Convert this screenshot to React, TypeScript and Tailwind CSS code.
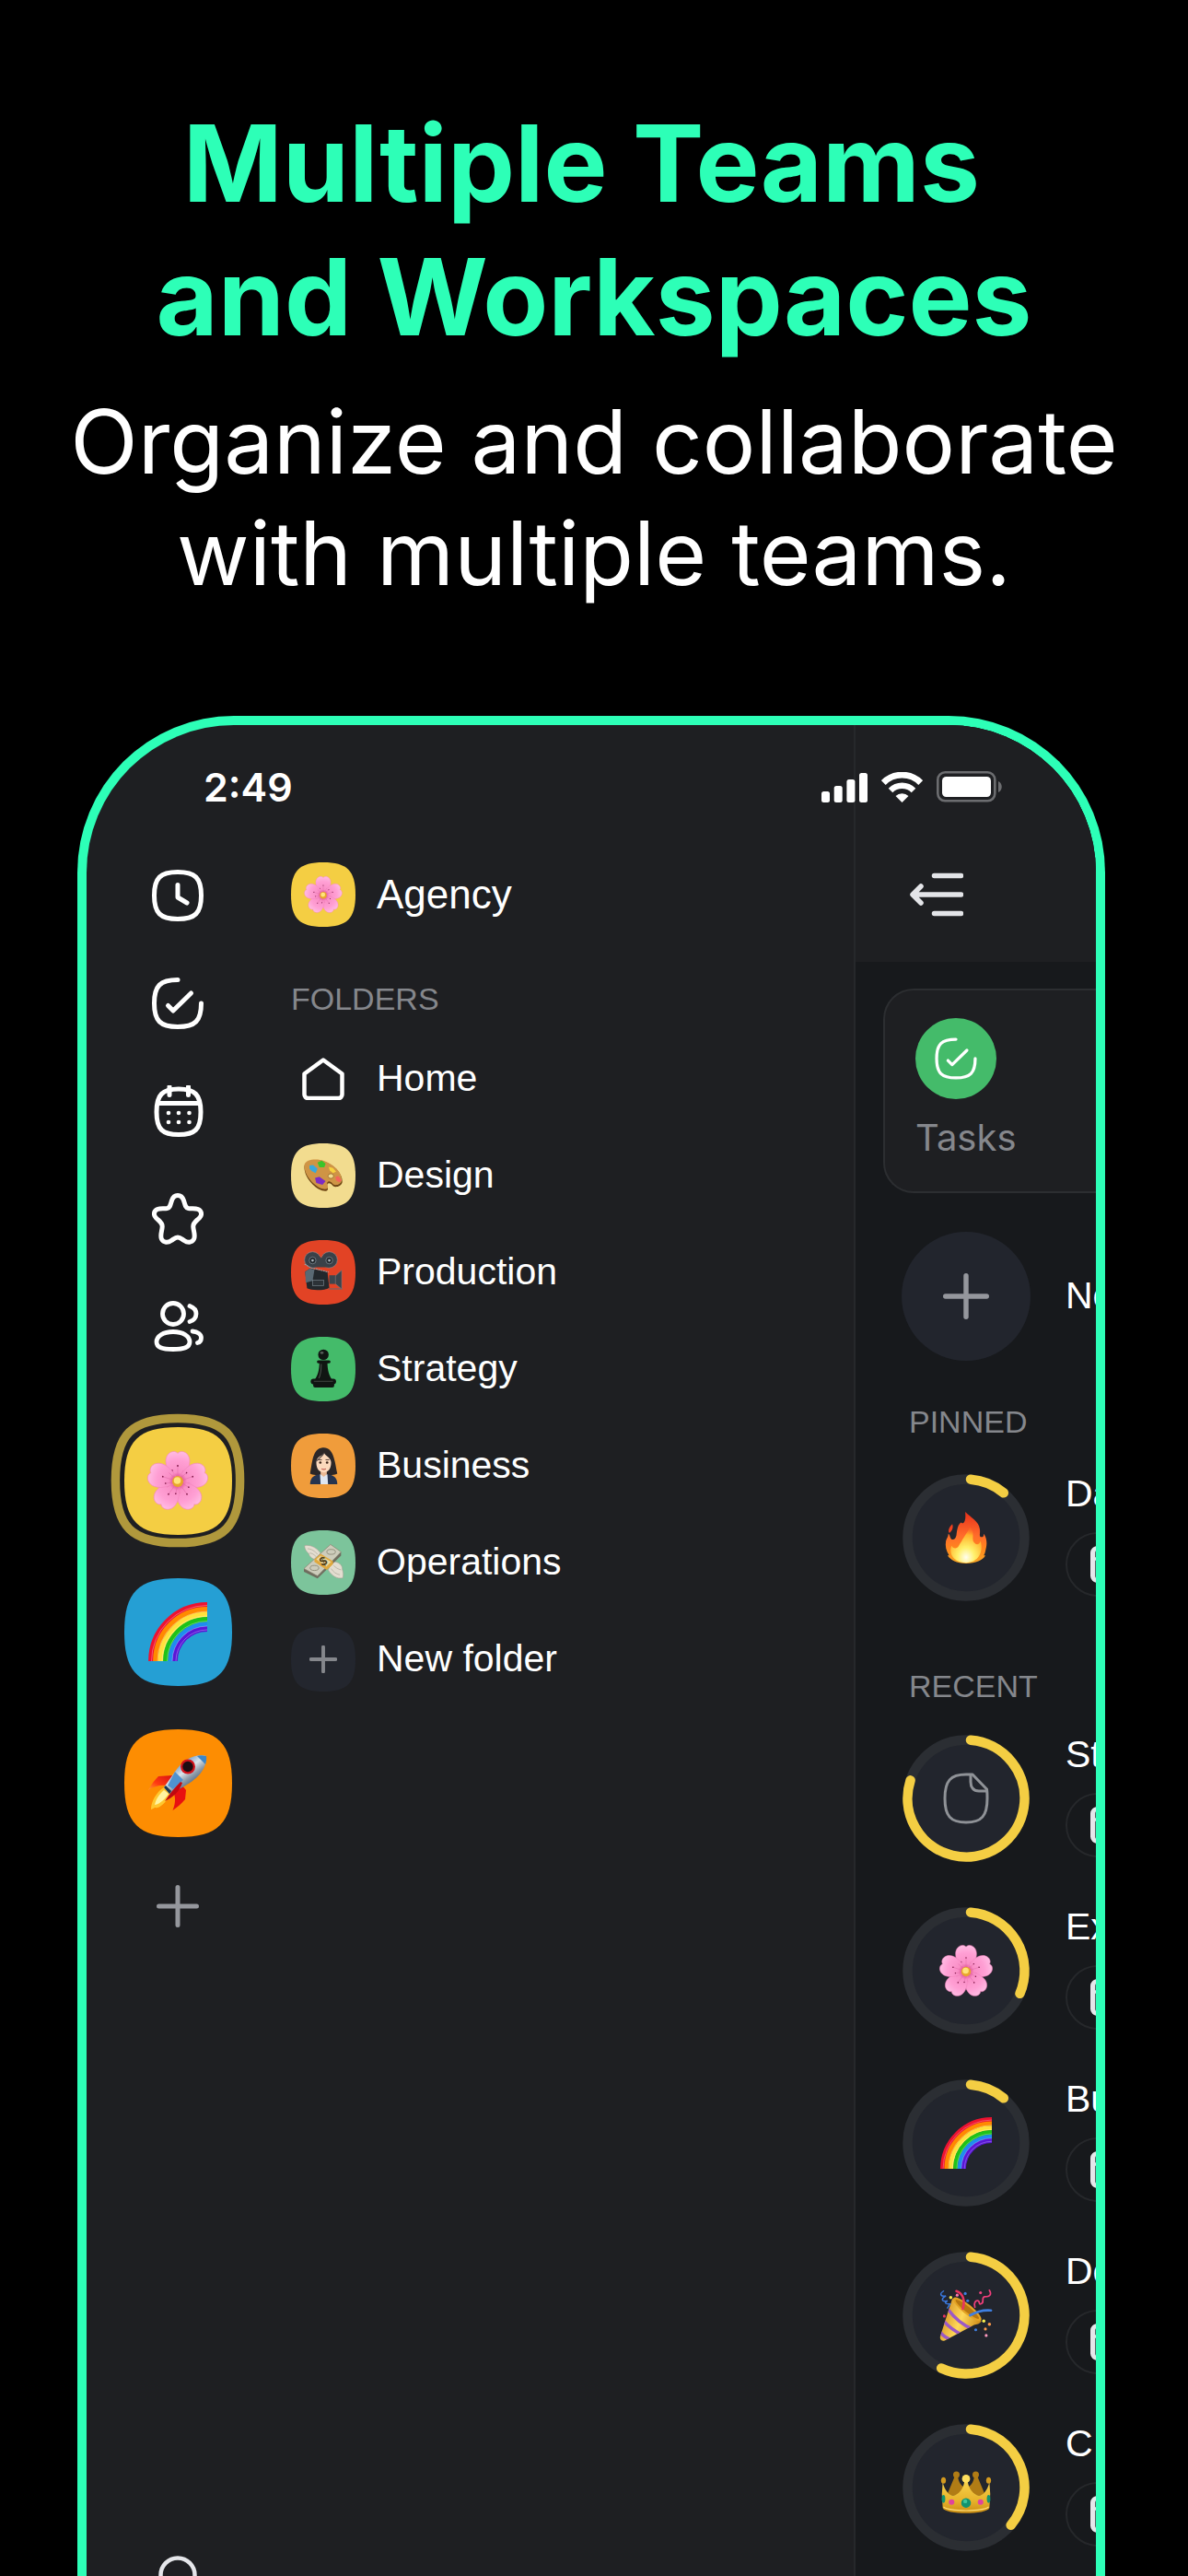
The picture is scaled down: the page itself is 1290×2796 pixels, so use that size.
import type { ReactNode } from "react";

const SQUIRCLE = "M50 0C87 0 100 13 100 50S87 100 50 100 0 87 0 50 13 0 50 0Z";

/* ---------- Line icons ---------- */

function ClockIcon() {
  return (
    <svg viewBox="0 0 56 56" className="size-14" fill="none" stroke="currentColor" strokeWidth="5" strokeLinecap="round" strokeLinejoin="round">
      <path d="M28 2.5C47 2.5 53.5 9 53.5 28S47 53.5 28 53.5 2.5 47 2.5 28 9 2.5 28 2.5Z" />
      <path d="M28 16.5V30L38 36" />
    </svg>
  );
}

function CheckIcon({ className, stroke = 5 }: { className: string; stroke?: number }) {
  return (
    <svg viewBox="0 0 56 56" className={className} fill="none" stroke="currentColor" strokeWidth={stroke} strokeLinecap="round" strokeLinejoin="round">
      <path d="M28 2.5C9 2.5 2.5 9 2.5 28S9 53.5 28 53.5 53.5 47 53.5 28" />
      <path d="M17.5 30.5L23 36L42.5 17" />
    </svg>
  );
}

function CalendarIcon() {
  return (
    <svg viewBox="0 0 56 56" className="size-14" fill="none" stroke="currentColor" strokeWidth="5" strokeLinecap="round">
      <path d="M29 4C46.500 4 53 10 53 29S46.500 53.500 29 53.500 5 48 5 29 11.500 4 29 4Z" />
      <path d="M6.500 19.500H51.500M19 1.500V10.500M39.500 1.500V10.500" />
      <g fill="currentColor" stroke="none">
        <circle cx="18" cy="30" r="2.3" />
        <circle cx="29" cy="30" r="2.3" />
        <circle cx="40.5" cy="30" r="2.3" />
        <circle cx="18" cy="40" r="2.3" />
        <circle cx="29" cy="40" r="2.3" />
        <circle cx="40.5" cy="40" r="2.3" />
      </g>
    </svg>
  );
}

function StarIcon() {
  return (
    <svg viewBox="0 0 56 56" className="size-14" fill="none" stroke="currentColor" strokeWidth="5" strokeLinejoin="round">
      <path d="M28 2.5C31.5 2.5 33.5 5 34.5 8C36 13 36.5 16 39.5 16.5C43 17 46.5 16 50 17.5C54.5 19.5 54.5 24 51.5 27C48 30.5 44.5 32 44.8 36.5C45 41 47.5 46 45.5 50C43.5 54 38.5 54 35 51.5C32 49.5 30.5 48 28 48C25.5 48 24 49.5 21 51.5C17.5 54 12.5 54 10.5 50C8.5 46 11 41 11.2 36.5C11.5 32 8 30.5 4.5 27C1.5 24 1.5 19.5 6 17.5C9.5 16 13 17 16.5 16.5C19.5 16 20 13 21.5 8C22.5 5 24.5 2.5 28 2.5Z" />
    </svg>
  );
}

function UsersIcon() {
  return (
    <svg viewBox="0 0 56 56" className="size-14" fill="none" stroke="currentColor" strokeWidth="4.8" strokeLinecap="round">
      <circle cx="23" cy="14" r="11.5" />
      <path d="M23 33.5C34 33.5 41 38.5 41 44.5S35 52.5 23 52.5 5 50.5 5 44.5 12 33.5 23 33.5Z" />
      <path d="M41 5.5C45 7 48 10 48 14S45 21.5 41 22.5M44 33C50 33.5 53.5 36.5 53.5 40C53.5 43 52 45 49.5 45.5" />
    </svg>
  );
}

function HomeIcon() {
  return (
    <svg viewBox="0 0 46 46" className="size-[46px]" fill="none" stroke="currentColor" strokeWidth="4.5" strokeLinejoin="round">
      <path d="M23 2.5L43.5 17.5V40A4 4 0 0 1 39.5 44H6.5A4 4 0 0 1 2.5 40V17.5Z" />
    </svg>
  );
}

function PlusIcon({ className, stroke }: { className: string; stroke: number }) {
  return (
    <svg viewBox="0 0 46 46" className={className} fill="none" stroke="currentColor" strokeWidth={stroke} strokeLinecap="round">
      <path d="M23 2.5V43.5M2.5 23H43.5" />
    </svg>
  );
}

function CollapseIcon() {
  return (
    <svg viewBox="0 0 58 48" className="h-12 w-[58px]" fill="none" stroke="currentColor" strokeWidth="5.5" strokeLinecap="round" strokeLinejoin="round">
      <path d="M26.5 3.5H55.5M4 24H55.5M26.5 44.5H55.5M12 15L3 24L12 33" />
    </svg>
  );
}

function DocIcon() {
  return (
    <svg viewBox="0 0 50 56" className="h-14 w-[50px]" fill="none" stroke="#8f9297" strokeWidth="3" strokeLinejoin="round">
      <path d="M32 2H25C8 2 2 9 2 28S8 54 25 54 48 47 48 28C48 24 48 21 47.5 18Z" />
      <path d="M30 2V10C30 16 33 20 39 20H47.5" />
    </svg>
  );
}

/* ---------- Emoji art, all on a 64 unit grid ---------- */

function Blossom() {
  return (
    <g>
      <defs>
        <radialGradient id="petal" gradientUnits="userSpaceOnUse" cx="32" cy="33" r="33">
          <stop offset="0.1" stopColor="#d9428a" />
          <stop offset="0.3" stopColor="#f98fc6" />
          <stop offset="0.7" stopColor="#ff9fd4" />
          <stop offset="1" stopColor="#ffbde4" />
        </radialGradient>
      </defs>
      {[0, 72, 144, 216, 288].map((a) => (
        <g key={a} transform={`rotate(${a} 32 33)`}>
          <path d="M32 34C26 28 19 20 19 11C19 4 24 0 28.5 0.5C31 0.8 32 2.5 32 2.5S33 0.8 35.5 0.5C40 0 45 4 45 11C45 20 38 28 32 34Z" fill="url(#petal)" stroke="#f384bd" strokeWidth="0.6" />
          <path d="M32 31V17M30 30L26 21M34 30L38 21" stroke="#e069a8" strokeWidth="0.5" fill="none" />
          <circle cx="32" cy="16" r="0.9" fill="#7d1545" />
          <circle cx="26" cy="21" r="0.8" fill="#7d1545" />
        </g>
      ))}
      <circle cx="32" cy="33" r="6" fill="#e9a52d" />
      <circle cx="31.5" cy="32" r="3.8" fill="#ffe37a" />
    </g>
  );
}

function Rainbow() {
  const bands = [
    ["#ee1230", 61], ["#ff8a00", 56], ["#ffe13c", 50.5],
    ["#1fc219", 45], ["#1f8cf0", 39.8], ["#5a16d6", 35],
  ] as const;
  return (
    <g fill="none">
      {bands.map(([color, r]) => (
        <path key={color} d={`M${64 - r} 64A${r} ${r} 0 0 1 64 ${64 - r}`} stroke={color} strokeWidth="5.8" />
      ))}
      {[60.5, 54, 49, 43.5, 38, 34].map((r) => (
        <path key={r} d={`M${64 - r} 64A${r} ${r} 0 0 1 64 ${64 - r}`} stroke="#fff" strokeOpacity="0.3" strokeWidth="1" />
      ))}
    </g>
  );
}

function Rocket() {
  return (
    <g transform="translate(0 2)">
      <defs>
        <linearGradient id="hull" x1="0.2" y1="0.2" x2="0.7" y2="0.8">
          <stop offset="0" stopColor="#3d79b8" />
          <stop offset="0.45" stopColor="#dce5ea" />
          <stop offset="0.7" stopColor="#8d9aa6" />
          <stop offset="1" stopColor="#3c5a7c" />
        </linearGradient>
        <linearGradient id="fin" x1="1" y1="0" x2="0" y2="1">
          <stop offset="0" stopColor="#d80f12" />
          <stop offset="0.6" stopColor="#ff3b12" />
          <stop offset="1" stopColor="#ffa228" />
        </linearGradient>
      </defs>
      <path d="M17 35C9 40 3 50 3 59C6 58 6 57 8 57C10 59 20 52 24 42Z" fill="#ffc62e" />
      <path d="M17 38C11 43 8 49 7 54C13 53 19 47 22 42Z" fill="#fff4a0" />
      <path d="M0 38C3 32 7 27 11 23L27 22L20 33C13 32 6 34 0 38Z" fill="url(#fin)" />
      <path d="M26.5 60C31 57 36 53 40 48L41 38L36 32L28 42C30 48 29 54 26.5 60Z" fill="#e81010" />
      <path d="M63 1C50-2 37 6 29 18L17 35L23 42L37 35C52 27 64 16 63 1Z" fill="url(#hull)" />
      <path d="M63 1C59 0 56 0 53 1L62 10C63 7 63.5 4 63 1Z" fill="#3d86c6" />
      <path d="M29 18L21 33L27 37L38 27Z" fill="#4f92cf" />
      <path d="M17 35L23 42L25 39L19 33Z" fill="#193650" />
      <path d="M35 29C29 35 23 42 18 50C27 46 34 39 37 30Z" fill="#c00810" />
      <circle cx="43" cy="12.5" r="8" fill="#d3131b" />
      <circle cx="43" cy="12.5" r="5.7" fill="#1c0d12" />
    </g>
  );
}

function Fire() {
  return (
    <g>
      <defs>
        <linearGradient id="flame" x1="0" y1="0" x2="0" y2="1">
          <stop offset="0" stopColor="#e8301a" />
          <stop offset="0.45" stopColor="#ff6a2b" />
          <stop offset="0.75" stopColor="#ff8a1c" />
          <stop offset="1" stopColor="#f7a928" />
        </linearGradient>
        <radialGradient id="ember" cx="0.5" cy="0.85" r="0.8">
          <stop offset="0" stopColor="#fffdf0" />
          <stop offset="0.35" stopColor="#fff06a" />
          <stop offset="0.8" stopColor="#ffb02a" />
          <stop offset="1" stopColor="#ff8424" stopOpacity="0.3" />
        </radialGradient>
      </defs>
      <path d="M31 0C38 7 48 12 49 21C50 26 48 29 50 31C53 32 54 30 54 27C57 31 58.5 38 57 44C56 48 56 51 54 54L56 54C53 60 44 64 32 64C20 64 13 60 9 54L11 54C7 48 6 42 7 36C8 32 10 31 10 27C12 28 12 32 14 34C17 35 19 33 20 29C21 21 22 15 26 13C28 15 29 14 30 12C32 8 31 3 31 0Z" fill="url(#flame)" />
      <path d="M15 15C17 21 13 25 11 26C9 22 12 18 15 15Z" fill="#f2401f" />
      <path d="M37 19C44 26 38 33 42 38C45 42 49 40 50 36C54 50 47 63 32 63C17 63 10 52 14 42C16 46 21 46 23 42C27 35 31 29 37 19Z" fill="url(#ember)" />
    </g>
  );
}

function Party() {
  return (
    <g fill="none" strokeLinecap="round">
      <defs>
        <linearGradient id="cone" x1="0" y1="0.3" x2="1" y2="0.7">
          <stop offset="0" stopColor="#d18b1c" />
          <stop offset="0.5" stopColor="#ffd95a" />
          <stop offset="1" stopColor="#c7810f" />
        </linearGradient>
        <clipPath id="coneShape">
          <path d="M15 11L51 39C49 43 45 43 42 44L6 63C2 65-1 62 0 58Z" />
        </clipPath>
      </defs>
      <path d="M15 11L51 39C49 43 45 43 42 44L6 63C2 65-1 62 0 58Z" fill="url(#cone)" />
      <g clipPath="url(#coneShape)" stroke="#9b59c6" strokeWidth="4" strokeLinecap="butt">
        <path d="M9 24C18 36 27 44 40 49M4 39C12 48 18 52 27 56M0 53C4 58 8 61 14 62" />
      </g>
      <ellipse cx="33.5" cy="24.5" rx="22" ry="6" transform="rotate(39 33.5 24.5)" fill="#e3a324" />
      <ellipse cx="33.5" cy="24.5" rx="18.5" ry="3.5" transform="rotate(39 33.5 24.5)" fill="#b8770f" />
      <path d="M20 2C28 5 31 13 28 24" stroke="#e8345f" strokeWidth="3" />
      <path d="M37 32C44 28 52 25 63 26" stroke="#3f7fe0" strokeWidth="3" />
      <path d="M43 22C41 17 44 13 47 14C50 16 47 18 50 18C56 17 50 10 55 9C62 9 64 6 61 1" stroke="#ef3f7a" strokeWidth="2" />
      <path d="M4 2C-2 6 1 9 7 8C0 12 2 16 9 14C4 17 7 18 12 18L9 23" stroke="#3a78dd" strokeWidth="1.7" />
      <g stroke="none">
        <circle cx="13" cy="10" r="2" fill="#f9ef4e" />
        <circle cx="21" cy="7" r="1.8" fill="#ff7ab0" />
        <circle cx="31" cy="5" r="1.8" fill="#3f7fe0" />
        <circle cx="34" cy="14" r="1.8" fill="#3f7fe0" />
        <circle cx="50" cy="4" r="1.8" fill="#f0457f" />
        <circle cx="54" cy="39" r="2" fill="#f9ef4e" />
        <circle cx="61" cy="43" r="2" fill="#ff9a4a" />
        <circle cx="44" cy="50" r="1.8" fill="#3f7fe0" />
        <circle cx="56" cy="49" r="1.8" fill="#ff9a4a" />
        <circle cx="57" cy="57" r="1.8" fill="#ff9ac0" />
        <circle cx="5" cy="33" r="1.8" fill="#e8345f" />
      </g>
    </g>
  );
}

function Crown() {
  return (
    <g>
      <defs>
        <linearGradient id="gold" x1="0" y1="0" x2="0" y2="1">
          <stop offset="0" stopColor="#f7d24c" />
          <stop offset="0.6" stopColor="#e8b32b" />
          <stop offset="1" stopColor="#c98d14" />
        </linearGradient>
      </defs>
      <g fill="#b17c15">
        <circle cx="20" cy="16" r="4" />
        <circle cx="44" cy="16" r="4" />
        <path d="M18 18L8 42H56L46 18L42 18C42 26 36 32 32 32S22 26 22 18Z" />
      </g>
      <g fill="#d39a20">
        <ellipse cx="4" cy="23" rx="3" ry="4" />
        <ellipse cx="60" cy="23" rx="3" ry="4" />
      </g>
      <path d="M3 26L2 40L3 57C6 66 58 66 61 57L62 40L61 26C58 36 53 42 48 42C41 41 35 33 34 24H30C29 33 23 41 16 42C11 42 6 36 3 26Z" fill="url(#gold)" />
      <circle cx="32" cy="21" r="5" fill="#ffdf5e" />
      <path d="M4 56C12 62 52 62 60 56" fill="none" stroke="#ffe07a" strokeWidth="1.2" />
      <circle cx="32" cy="51" r="6" fill="#12936f" />
      <circle cx="31" cy="49" r="2.5" fill="#3fc79b" />
      <circle cx="14" cy="50" r="3.5" fill="#e0449c" />
      <circle cx="50" cy="50" r="3.5" fill="#e0449c" />
      <ellipse cx="4" cy="46" rx="2.2" ry="5" fill="#12936f" />
      <ellipse cx="60" cy="46" rx="2.2" ry="5" fill="#12936f" />
    </g>
  );
}

function Palette() {
  return (
    <g>
      <path d="M1 15C4 6 20 4 34 9C50 15 63 29 62 42C60 49 51 51 47 48C44 44 40 42 38 45C36 49 42 54 36 56C22 58-2 34 1 15Z" fill="#6e4413" />
      <path d="M1 13C4 5 20 3 34 8C50 14 62 27 61 39C60 46 51 48 47 45C44 41 40 39 38 42C36 46 42 51 36 53C22 55-2 31 1 13Z" fill="#cf9445" />
      <ellipse cx="43.5" cy="32" rx="4.5" ry="3.8" fill="#f3dc8c" stroke="#8a5a20" strokeWidth="1" />
      <path d="M9 15L15 14L22 20L19 27L13 24L9 20Z" fill="#38a9dc" />
      <path d="M22 10L29 7L35 12L33 18L25 18Z" fill="#3cc42a" />
      <path d="M40 17L47 19L52 25L47 27L42 23Z" fill="#f8d23e" />
      <path d="M51 33L56 32L61 39L57 42L52 39Z" fill="#f4655a" />
      <path d="M18 35L25 33L35 40L30 46L20 43Z" fill="#7c2bc4" />
    </g>
  );
}

function Camera() {
  return (
    <g>
      <circle cx="14" cy="11" r="13" fill="#3a4148" stroke="#8d979f" strokeWidth="0.8" />
      <circle cx="41" cy="11" r="13" fill="#3a4148" stroke="#8d979f" strokeWidth="0.8" />
      <path d="M16 4H24L28 8L32 4H40V23H14Z" fill="#3a4148" />
      <circle cx="14" cy="12" r="5.5" fill="#20262b" stroke="#7d8991" strokeWidth="1.2" />
      <circle cx="41" cy="12" r="5.5" fill="#20262b" stroke="#7d8991" strokeWidth="1.2" />
      <circle cx="14" cy="12" r="2" fill="#aeb8bf" />
      <circle cx="41" cy="12" r="2" fill="#aeb8bf" />
      <path d="M2 30L10 25L38 30L41 56C34 61 12 61 5 57Z" fill="#23282c" />
      <path d="M2 30L10 25L17 27L14 45L3 48Z" fill="#5a6973" />
      <path d="M1 18L12 24L40 31" fill="none" stroke="#9aa5ad" strokeWidth="1.5" strokeDasharray="3 1" />
      <rect x="14" y="44" width="18" height="9" fill="#2c3237" stroke="#77838b" strokeWidth="1" />
      <path d="M41 36H51V50H41Z" fill="#3c464d" />
      <path d="M51 37L61 28V58L51 50Z" fill="#39434a" stroke="#75818a" strokeWidth="0.8" />
      <path d="M40 58H62" stroke="#5e6a72" strokeWidth="1.5" />
    </g>
  );
}

function Pawn() {
  return (
    <g fill="#101512">
      <circle cx="31.5" cy="8" r="8.5" />
      <rect x="21" y="17" width="22" height="5" rx="2.5" />
      <path d="M25 20H38C38 34 41 42 46 49H17C22 42 25 34 25 20Z" />
      <rect x="11" y="47" width="41" height="9" rx="4.5" />
      <rect x="15" y="53" width="34" height="8" rx="3" />
      <ellipse cx="29" cy="5" rx="3" ry="2.2" fill="#575d59" />
      <path d="M28 23C28 34 27 41 24 46" fill="none" stroke="#4b524d" strokeWidth="1.5" />
      <path d="M16 51H47" stroke="#4b524d" strokeWidth="1.2" />
    </g>
  );
}

function Woman() {
  return (
    <g>
      <path d="M10 44C14 24 14 4 30 2C48 0 50 24 54 44C46 48 18 48 10 44Z" fill="#2b2728" />
      <path d="M10 61C10 51 16 46 25 45H39C48 46 54 51 54 61Z" fill="#26344f" />
      <path d="M26 45H38L39 61H27Z" fill="#dfe7f2" />
      <path d="M27 38H37V45L32 49L27 45Z" fill="#e9b893" />
      <path d="M20 26C20 17 27 16 33 11C36 16 44 18 44 26C44 37 38 42 32 42S20 37 20 26Z" fill="#fbd9bd" />
      <circle cx="26.5" cy="26" r="2" fill="#3a2318" />
      <circle cx="37.5" cy="26" r="2" fill="#3a2318" />
      <path d="M23 21.5H29M35 21.5H41" stroke="#3b2d29" strokeWidth="1.3" />
      <path d="M28.5 36C31 37.5 33 37.5 35.5 36" fill="none" stroke="#c05b50" strokeWidth="1.8" />
      <path d="M20 24C24 19 30 16 33 10" fill="none" stroke="#4c4445" strokeWidth="1.5" />
    </g>
  );
}

function Money() {
  return (
    <g>
      <path d="M1 4C9 2 20 6 27 16L20 27C12 25 8 20 8 17C4 14 1 9 1 4Z" fill="#e3ddd0" stroke="#9e998c" strokeWidth="0.8" />
      <path d="M6 9C12 9 18 13 22 18M9 16C13 16 16 18 20 22" fill="none" stroke="#aaa596" strokeWidth="1" />
      <path d="M63 56C54 58 46 54 39 43L46 30C56 29 63 36 62 42C64 47 64 51 63 56Z" fill="#e3ddd0" stroke="#9e998c" strokeWidth="0.8" />
      <path d="M58 51C52 50 47 46 44 41M60 43C55 42 51 39 48 36" fill="none" stroke="#aaa596" strokeWidth="1" />
      <path d="M0 42L43 3L60 15V20L22 57L0 46Z" fill="#6f6d5f" />
      <path d="M0 41L43 2L60 14L22 53Z" fill="#cdccbb" stroke="#85836f" strokeWidth="1" />
      <ellipse cx="44" cy="14" rx="7" ry="4" fill="none" stroke="#85836f" strokeWidth="1.2" />
      <ellipse cx="17" cy="40" rx="7" ry="4" fill="none" stroke="#85836f" strokeWidth="1.2" />
      <path d="M17 26L27 17L47 29V34L37 43L17 30Z" fill="#e0a83c" />
      <path d="M20 26L27 20L44 30L36 38Z" fill="#e9d9a4" />
      <text x="31" y="36" textAnchor="middle" fontFamily="Liberation Sans" fontWeight="700" fontSize="20" fill="#4d3b14" transform="rotate(-25 31 29)">$</text>
    </g>
  );
}

function Emoji({ className, children }: { className: string; children: ReactNode }) {
  return (
    <svg viewBox="0 0 64 64" className={className} overflow="visible" aria-hidden="true">
      {children}
    </svg>
  );
}

/* ---------- Sidebar ---------- */

type Workspace = { name: string; color: string; art: ReactNode; active?: boolean };

const workspaces: Workspace[] = [
  { name: "Agency", color: "#f4ce43", art: <Blossom />, active: true },
  { name: "Rainbow", color: "#259fd4", art: <Rainbow /> },
  { name: "Rocket", color: "#fd8d02", art: <Rocket /> },
];

const folders = [
  { name: "Design", color: "#f2dc8f", art: <Palette /> },
  { name: "Production", color: "#e24325", art: <Camera /> },
  { name: "Strategy", color: "#44bb6a", art: <Pawn /> },
  { name: "Business", color: "#f09c3b", art: <Woman /> },
  { name: "Operations", color: "#7cc49b", art: <Money /> },
];

function Tile({ color, children }: { color: string; children: ReactNode }) {
  return (
    <span className="grid size-[70px] shrink-0 place-items-center">
      <svg viewBox="0 0 100 100" className="col-start-1 row-start-1 size-full">
        <path d={SQUIRCLE} fill={color} />
      </svg>
      <span className="z-10 col-start-1 row-start-1">{children}</span>
    </span>
  );
}

function Rail() {
  return (
    <nav aria-label="Workspaces" className="flex w-[198px] shrink-0 flex-col items-center pt-[157px] text-white">
      <div className="flex flex-col gap-[61px]">
        <button type="button" aria-label="Recent"><ClockIcon /></button>
        <button type="button" aria-label="Tasks"><CheckIcon className="size-14" /></button>
        <button type="button" aria-label="Calendar"><CalendarIcon /></button>
        <button type="button" aria-label="Favorites"><StarIcon /></button>
        <button type="button" aria-label="People"><UsersIcon /></button>
      </div>

      <div className="mt-[66px] flex flex-col gap-[18px]">
        {workspaces.map((w) => (
          <button key={w.name} type="button" aria-label={w.name} className="grid size-[146px] place-items-center">
            {w.active && (
              <svg viewBox="-4 -4 108 108" className="col-start-1 row-start-1 size-full">
                <path d={SQUIRCLE} fill="none" stroke="#b0983c" strokeWidth="7" />
              </svg>
            )}
            <svg viewBox="0 0 100 100" className="col-start-1 row-start-1 size-[117px]">
              <path d={SQUIRCLE} fill={w.color} />
            </svg>
            <Emoji className="z-10 col-start-1 row-start-1 size-16">{w.art}</Emoji>
          </button>
        ))}
      </div>

      <button type="button" aria-label="Add workspace" className="mt-[38px] text-[#95979d]">
        <PlusIcon className="size-[46px]" stroke={5} />
      </button>

      <button type="button" aria-label="Profile" className="mt-auto -mb-9 text-[#e5e6ea]">
        <svg viewBox="0 0 56 58" className="h-[58px] w-14" fill="none" stroke="currentColor" strokeWidth="4.5">
          <circle cx="28" cy="21" r="18.5" />
          <path d="M5 57C8 46 17 42 28 42S48 46 51 57" />
        </svg>
      </button>
    </nav>
  );
}

function Folders() {
  return (
    <section className="min-w-0 flex-1 pt-[149px] pl-6 font-['Liberation_Sans',Arial,sans-serif] text-[41px] text-white">
      <a href="#agency" className="flex h-[70px] items-center gap-[23px] text-[44px]">
        <Tile color="#f4ce43"><Emoji className="size-10"><Blossom /></Emoji></Tile>
        Agency
      </a>
      <h2 className="mt-[58px] text-[34px] leading-10 text-[#85878c]">FOLDERS</h2>
      <div className="mt-8 flex flex-col gap-[35px]">
        <a href="#home" className="flex h-[70px] items-center gap-[23px]">
          <span className="flex size-[70px] items-center justify-center"><HomeIcon /></span>
          Home
        </a>
        {folders.map((f) => (
          <a key={f.name} href={`#${f.name.toLowerCase()}`} className="flex h-[70px] items-center gap-[23px]">
            <Tile color={f.color}><Emoji className="size-[43px]">{f.art}</Emoji></Tile>
            {f.name}
          </a>
        ))}
        <button type="button" className="flex h-[70px] items-center gap-[23px] text-left">
          <Tile color="#23262e">
            <span className="text-[#85878c]"><PlusIcon className="size-[30px]" stroke={6} /></span>
          </Tile>
          New folder
        </button>
      </div>
    </section>
  );
}

/* ---------- Document list ---------- */

type Doc = { title: string; end: number; art: ReactNode };

const pinned: Doc[] = [
  { title: "Da", end: 40, art: <Emoji className="size-14"><Fire /></Emoji> },
];

const recent: Doc[] = [
  { title: "St", end: 288, art: <DocIcon /> },
  { title: "Ex", end: 113, art: <Emoji className="size-14"><Blossom /></Emoji> },
  { title: "Bu", end: 40, art: <Emoji className="size-14"><Rainbow /></Emoji> },
  { title: "De", end: 205, art: <Emoji className="size-14"><Party /></Emoji> },
  { title: "C", end: 130, art: <Emoji className="size-14"><Crown /></Emoji> },
];

// start and end are degrees clockwise from the top of the ring
function arc(start: number, end: number, r: number) {
  const point = (deg: number) => {
    const t = (deg * Math.PI) / 180;
    return `${70 + r * Math.sin(t)} ${70 - r * Math.cos(t)}`;
  };
  return `M${point(start)}A${r} ${r} 0 ${end - start > 180 ? 1 : 0} 1 ${point(end)}`;
}

function DocRow({ doc }: { doc: Doc }) {
  return (
    <li className="flex h-[140px] items-start gap-[38px]">
      <span className="grid size-[140px] shrink-0 place-items-center">
        <svg viewBox="0 0 140 140" className="col-start-1 row-start-1 size-full" fill="none" strokeWidth="10.5">
          <circle cx="70" cy="70" r="63.5" fill="#22252d" stroke="#2b2e33" />
          <path d={arc(4.5, doc.end, 63.5)} stroke="#f4ce43" strokeLinecap="round" />
        </svg>
        <span className="z-10 col-start-1 row-start-1">{doc.art}</span>
      </span>
      <div className="shrink-0">
        <h3 className="text-[41px] leading-[44px]">{doc.title}</h3>
        <div className="mt-5 flex h-[70px] w-40 items-center rounded-full border-2 border-[#26282b] pl-[25px]">
          <svg viewBox="0 0 40 40" className="size-10" fill="#5c5f63" stroke="#e5e6ea" strokeWidth="5">
            <rect x="2.5" y="2.5" width="35" height="35" rx="5" />
            <path d="M3 14H37" strokeWidth="3.5" />
          </svg>
        </div>
      </div>
    </li>
  );
}

function Documents() {
  return (
    <section className="w-[263px] shrink-0 overflow-hidden border-l-2 border-[#26282b] bg-[#17191c] font-['Liberation_Sans',Arial,sans-serif] text-white">
      <header className="h-[257px] bg-[#1e1f22] pt-40 pl-[59px]">
        <button type="button" aria-label="Collapse sidebar" className="block text-[#e3e4e8]">
          <CollapseIcon />
        </button>
      </header>

      <a href="#tasks" className="mt-[29px] ml-[30px] block h-[222px] rounded-l-[33px] border-2 border-r-0 border-[#2c2e31] bg-[#1e1f22] pt-[30px] pl-[33px]">
        <span className="flex size-[88px] items-center justify-center rounded-full bg-[#44bb6a] text-white">
          <CheckIcon className="size-[46px]" stroke={4} />
        </span>
        <span className="mt-[18px] block font-['Inter',sans-serif] text-[40px] leading-[48px] text-[#85878c]">Tasks</span>
      </a>

      <button type="button" className="mt-[42px] ml-[50px] flex w-max items-center gap-[38px] text-[41px]">
        <span className="flex size-[140px] items-center justify-center rounded-full bg-[#22252d] text-[#95979d]">
          <PlusIcon className="size-[50px]" stroke={5} />
        </span>
        Ne
      </button>

      <h2 className="mt-[46px] ml-[58px] text-[34px] leading-10 text-[#85878c]">PINNED</h2>
      <ul className="mt-9 ml-[50px]">
        {pinned.map((d) => <DocRow key={d.title} doc={d} />)}
      </ul>

      <h2 className="mt-[71px] ml-[58px] text-[34px] leading-10 text-[#85878c]">RECENT</h2>
      <ul className="mt-8 ml-[50px] flex flex-col gap-[47px]">
        {recent.map((d) => <DocRow key={d.title} doc={d} />)}
      </ul>
    </section>
  );
}

function StatusBar() {
  return (
    <div className="absolute inset-x-0 top-0 z-20 flex h-[134px] items-center justify-between pr-[101px] pl-[127px] text-white">
      <time className="font-['Inter',sans-serif] text-[43px] leading-[52px] font-semibold">2:49</time>
      <div className="flex items-center gap-[15px]">
        <svg viewBox="0 0 50 33" className="h-[33px] w-[50px]" fill="currentColor">
          <rect x="0" y="21" width="9" height="12" rx="2.5" />
          <rect x="13.7" y="15" width="9" height="18" rx="2.5" />
          <rect x="27.4" y="8" width="9" height="25" rx="2.5" />
          <rect x="41" y="1" width="9" height="32" rx="2.5" />
        </svg>
        <svg viewBox="0 0 45 33" className="h-[33px] w-[45px]" fill="none" stroke="currentColor">
          <path d="M2.300 11.500A28.500 28.500 0 0 1 42.700 11.500" strokeWidth="6.8" />
          <path d="M10 20A17.8 17.8 0 0 1 35 20" strokeWidth="6.5" />
          <path d="M22.5 33L15.5 26A10 10 0 0 1 29.5 26Z" fill="currentColor" stroke="none" />
        </svg>
        <svg viewBox="0 0 72 34" className="h-[34px] w-[72px]">
          <rect x="1.3" y="1.3" width="62" height="31" rx="8" fill="none" stroke="#6c6d70" strokeWidth="2.6" />
          <rect x="6" y="6" width="53" height="22" rx="4.5" fill="#fff" />
          <path d="M67 11C72 13 72 21 67 23Z" fill="#6c6d70" />
        </svg>
      </div>
    </div>
  );
}

export default function App() {
  return (
    <main className="flex h-screen flex-col overflow-hidden bg-black pt-[105px]">
      <div className="text-center font-['Inter',sans-serif]">
        <h1 className="text-[116px] leading-[145px] font-bold text-[#2dffb7]">
          Multiple Teams&nbsp;
          <br />
          and Workspaces
        </h1>
        <p className="mt-6 text-[96px] leading-[121px] text-white">
          Organize and collaborate
          <br />
          with multiple teams.
        </p>
      </div>

      <div className="relative mt-[116px] mr-[90px] ml-[84px] flex min-h-0 flex-1 overflow-hidden rounded-t-[170px] border-10 border-b-0 border-[#2dffb7] bg-[#1e1f22]">
        <StatusBar />
        <Rail />
        <Folders />
        <Documents />
      </div>
    </main>
  );
}
